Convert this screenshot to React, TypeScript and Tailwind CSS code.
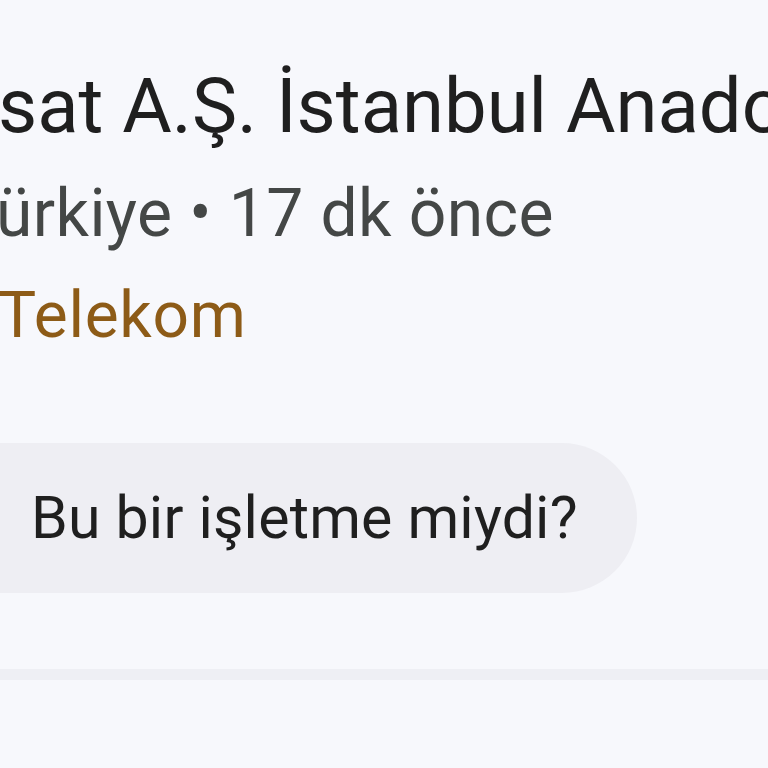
export default function App() {
  return (
    <div className="w-[768px] h-[768px] overflow-hidden bg-[#f7f8fc] font-['Roboto','Noto_Sans',sans-serif]">
      <div className="pt-[56px] whitespace-nowrap">
        <div className="text-[76px] leading-[100px] text-[#1f1f1f] -ml-[2px]">
          sat A.Ş. İstanbul Anadolu
        </div>
        <div className="mt-[8px] text-[66px] leading-[100px] tracking-[0.4px] text-[#444746] -ml-[4px]">
          ürkiye • 17 dk önce
        </div>
        <div className="mt-[2px] text-[64px] leading-[100px] tracking-[0.7px] text-[#8d5b17] -ml-[2px]">
          Telekom
        </div>
      </div>
      <div className="mt-[77px] flex h-[150px] w-[637px] items-center rounded-r-[75px] bg-[#eeeef3] pl-[31px]">
        <span className="text-[59px] tracking-[0.2px] text-[#1f1f1f]">Bu bir işletme miydi?</span>
      </div>
      <div className="mt-[76px] h-[11px] bg-[#eeeff4]" />
    </div>
  );
}
